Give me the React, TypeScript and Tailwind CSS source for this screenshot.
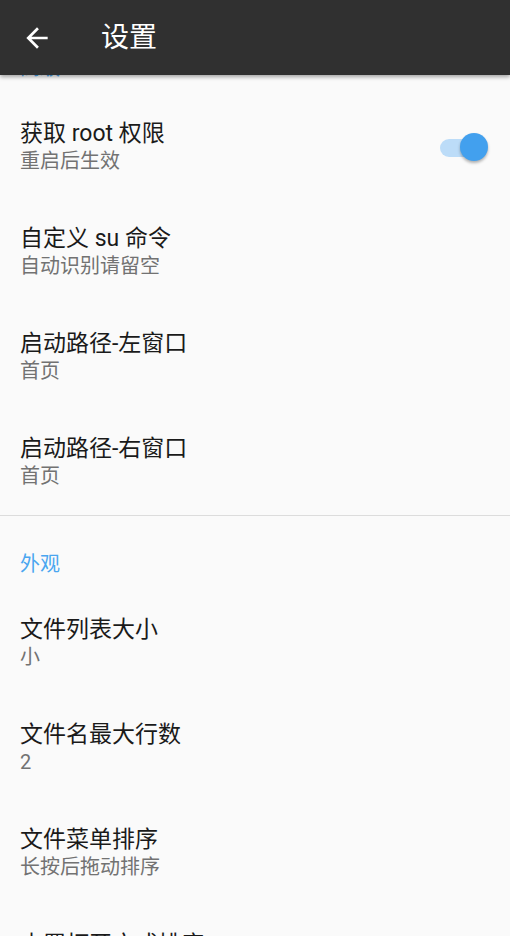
const font = { fontFamily: "Roboto, 'Noto Sans CJK SC', sans-serif" };

type Item = { title: string; summary: string; toggle?: boolean };

const sections: { label: string; items: Item[] }[] = [
  {
    label: '高级',
    items: [
      { title: '获取 root 权限', summary: '重启后生效', toggle: true },
      { title: '自定义 su 命令', summary: '自动识别请留空' },
      { title: '启动路径-左窗口', summary: '首页' },
      { title: '启动路径-右窗口', summary: '首页' },
    ],
  },
  {
    label: '外观',
    items: [
      { title: '文件列表大小', summary: '小' },
      { title: '文件名最大行数', summary: '2' },
      { title: '文件菜单排序', summary: '长按后拖动排序' },
      { title: '内置打开方式排序', summary: '长按后拖动排序' },
    ],
  },
];

function Switch() {
  return (
    <div className="relative w-[48px] h-[30px] flex items-center">
      <div className="w-[46px] h-[18px] rounded-full bg-[#bcdcf8]" />
      <div className="absolute right-0 top-0 w-[28px] h-[28px] rounded-full bg-[#42a0ee] shadow-[0_2px_3px_rgba(0,0,0,0.3)]" />
    </div>
  );
}

export default function App() {
  return (
    <div className="w-[510px] h-[936px] overflow-hidden bg-[#fafafa]" style={font}>
      <div className="relative z-10 h-[75px] bg-[#303030] flex items-center shadow-[0_2px_4px_rgba(0,0,0,0.35)]">
        <div className="w-[101px] flex items-center pl-[21px]">
          <svg width="32" height="32" viewBox="0 0 24 24" fill="#ffffff">
            <path d="M20 11H7.83l5.59-5.59L12 4l-8 8 8 8 1.41-1.41L7.83 13H20v-2z" />
          </svg>
        </div>
        <span className="text-white text-[28px] leading-none">设置</span>
      </div>

      <div className="-mt-[55px]">
        {sections.map((section, si) => (
          <div key={section.label} className={si > 0 ? 'border-t border-[#dcdcdc]' : ''}>
            <div className="pt-[35px] pb-[14px] px-5 text-[20px] leading-[26px] text-[#4aa6f0]">
              {section.label}
            </div>
            {section.items.map((item) => (
              <div key={item.title} className="h-[105px] flex items-center pl-5 pr-[22px]">
                <div className="flex-1 flex flex-col -mt-[2px]">
                  <span className="text-[23px] leading-[29px] text-[#1a1a1a]">{item.title}</span>
                  <span className="text-[20px] leading-[27px] text-[#727272]">{item.summary}</span>
                </div>
                {item.toggle && <Switch />}
              </div>
            ))}
          </div>
        ))}
      </div>
    </div>
  );
}
